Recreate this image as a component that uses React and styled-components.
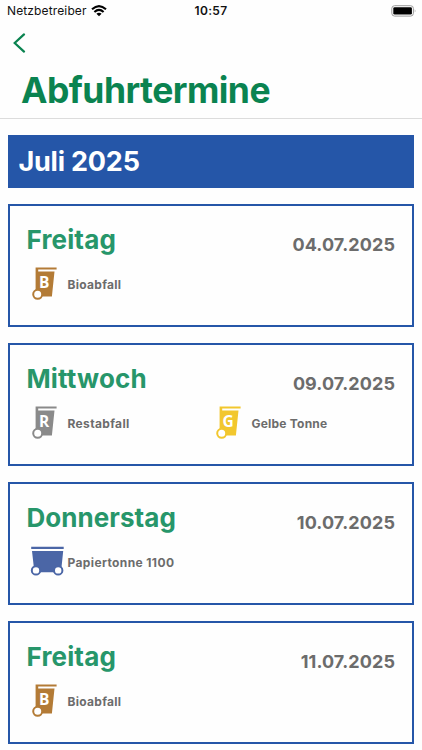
import React from 'react'
import styled, { createGlobalStyle } from 'styled-components'

const GlobalStyle = createGlobalStyle`
  body {
    margin: 0;
    background: #fefefe;
    font-family: Inter, 'Liberation Sans', sans-serif;
    overflow: hidden;
  }
`

const Screen = styled.div`
  width: 422px;
  height: 750px;
  overflow: hidden;
`

const StatusBar = styled.div`
  display: grid;
  grid-template-columns: 1fr auto 1fr;
  align-items: center;
  height: 22px;
  padding: 0 5px 0 7px;
  color: #111;
`

const Carrier = styled.div`
  display: flex;
  align-items: center;
  gap: 4px;
  font-size: 12px;
  line-height: 22px;
  letter-spacing: 0.13px;
`

const Clock = styled.div`
  margin-right: 2px;
  font-size: 12px;
  line-height: 22px;
  font-weight: 600;
  letter-spacing: 0.35px;
`

const Battery = styled.svg`
  justify-self: end;
  margin-bottom: 1px;
`

const Header = styled.header`
  height: 96px;
  border-bottom: 1px solid #dcdcdc;
`

const BackButton = styled.button`
  display: block;
  height: 42px;
  padding: 0 0 0 12px;
  border: 0;
  background: none;
  color: #0a8350;

  svg {
    display: block;
  }
`

const Title = styled.h1`
  margin: 0 0 0 21px;
  padding-top: 1px;
  font-size: 35.5px;
  line-height: 51px;
  font-weight: 700;
  letter-spacing: -0.55px;
  color: #0a8350;
  white-space: nowrap;
`

const List = styled.main`
  display: flex;
  flex-direction: column;
  gap: 16.2px;
  padding: 16px 8px 0;
`

const Month = styled.h2`
  margin: 0 0 0 0.4px;
  padding-left: 10px;
  height: 53px;
  line-height: 54px;
  font-size: 27px;
  font-weight: 650;
  letter-spacing: -0.2px;
  color: #fff;
  background: #2556a8;
`

const Card = styled.section`
  box-sizing: border-box;
  height: 122.8px;
  border: 2px solid #2556a8;
  padding: 15px 17px 0 16.5px;
`

const CardHead = styled.div`
  display: flex;
  justify-content: space-between;
  height: 45px;
`

const Day = styled.h3`
  margin: 0;
  font-size: 26px;
  line-height: 37px;
  font-weight: 670;
  letter-spacing: ${props => props.$spacing}px;
  color: #27966a;
`

const DateText = styled.div`
  font-size: 18px;
  line-height: 47px;
  font-weight: 650;
  letter-spacing: 0.1px;
  color: #6c6c6c;
`

const Bins = styled.div`
  display: grid;
  grid-template-columns: 184px 1fr;
`

const Bin = styled.div`
  display: flex;
  align-items: center;
  gap: 1px;
  height: 36px;
`

const BinLabel = styled.span`
  font-size: 12px;
  font-weight: 650;
  letter-spacing: ${props => props.$spacing}px;
  color: #6c6c6c;
  white-space: nowrap;
`

const BinLetter = styled.text`
  font-family: 'Open Sans', sans-serif;
  font-size: 15.5px;
  font-weight: 700;
  fill: #fff;
`

function BinIcon ({ color, letter }) {
  return <svg width='40' height='36' viewBox='0 0 40 36'>
    <path d='M8.6 1.6H29.6V3.6H11.2V5.6H27.5L24.9 30.4H15.5L8.6 25Z' fill={color} />
    <circle cx='10.7' cy='28.3' r='4.5' fill='#fff' stroke={color} strokeWidth='2' />
    <BinLetter x='17.1' y='21.6' textAnchor='middle'>{letter}</BinLetter>
  </svg>
}

function CartIcon ({ color }) {
  return <svg width='40' height='36' viewBox='0 0 40 36'>
    <path d='M4.2 2.7H36.7V5.1H4.2ZM5 7H36.2L34 28.2H7.4Z' fill={color} />
    <circle cx='9' cy='26.4' r='4.2' fill='#fff' stroke={color} strokeWidth='2' />
    <circle cx='31.2' cy='26.4' r='4.2' fill='#fff' stroke={color} strokeWidth='2' />
  </svg>
}

const bio = { label: 'Bioabfall', letter: 'B', color: '#b37b36', spacing: 0.3 }

const pickups = [
  { day: 'Freitag', date: '04.07.2025', spacing: 0.15, bins: [bio] },
  {
    day: 'Mittwoch',
    date: '09.07.2025',
    spacing: 0.15,
    bins: [
      { label: 'Restabfall', letter: 'R', color: '#8a8a8a', spacing: 0.35 },
      { label: 'Gelbe Tonne', letter: 'G', color: '#f2c72e', spacing: 0.22 }
    ]
  },
  {
    day: 'Donnerstag',
    date: '10.07.2025',
    spacing: 0.05,
    bins: [{ label: 'Papiertonne 1100', color: '#4b66a6', spacing: 0.38 }]
  },
  { day: 'Freitag', date: '11.07.2025', spacing: 0.15, bins: [bio] }
]

export default function App () {
  return <Screen>
    <GlobalStyle />
    <StatusBar>
      <Carrier>
        Netzbetreiber
        <svg width='16' height='12' viewBox='0 0 16 12' fill='none' stroke='#000' strokeWidth='2.1'>
          <path d='M1 4.3Q8 -2.1 15 4.3' />
          <path d='M3.4 7Q8 2.8 12.6 7' />
          <path d='M8 11.3L5.4 8.8Q8 6.7 10.6 8.8Z' fill='#000' stroke='none' />
        </svg>
      </Carrier>
      <Clock>10:57</Clock>
      <Battery width='26' height='12' viewBox='0 0 26 12'>
        <rect x='0.8' y='0.7' width='21.6' height='10.4' rx='2.8' fill='none' stroke='#9b9b9b' />
        <rect x='2.3' y='2.2' width='18.6' height='7.4' rx='1.4' fill='#000' />
        <path d='M23.8 4.2Q25.2 5.9 23.8 7.6Z' fill='#8b8b8b' />
      </Battery>
    </StatusBar>
    <Header>
      <BackButton aria-label='Zurück'>
        <svg width='14' height='20' viewBox='0 0 14 20'>
          <path d='M12 1.4L2.7 10L12 18.6' fill='none' stroke='currentColor' strokeWidth='2.2' strokeLinecap='round' />
        </svg>
      </BackButton>
      <Title>Abfuhrtermine</Title>
    </Header>
    <List>
      <Month>Juli 2025</Month>
      {pickups.map(pickup => <Card key={pickup.date}>
        <CardHead>
          <Day $spacing={pickup.spacing}>{pickup.day}</Day>
          <DateText>{pickup.date}</DateText>
        </CardHead>
        <Bins>
          {pickup.bins.map(bin => <Bin key={bin.label}>
            {bin.letter ? <BinIcon color={bin.color} letter={bin.letter} /> : <CartIcon color={bin.color} />}
            <BinLabel $spacing={bin.spacing}>{bin.label}</BinLabel>
          </Bin>)}
        </Bins>
      </Card>)}
    </List>
  </Screen>
}
